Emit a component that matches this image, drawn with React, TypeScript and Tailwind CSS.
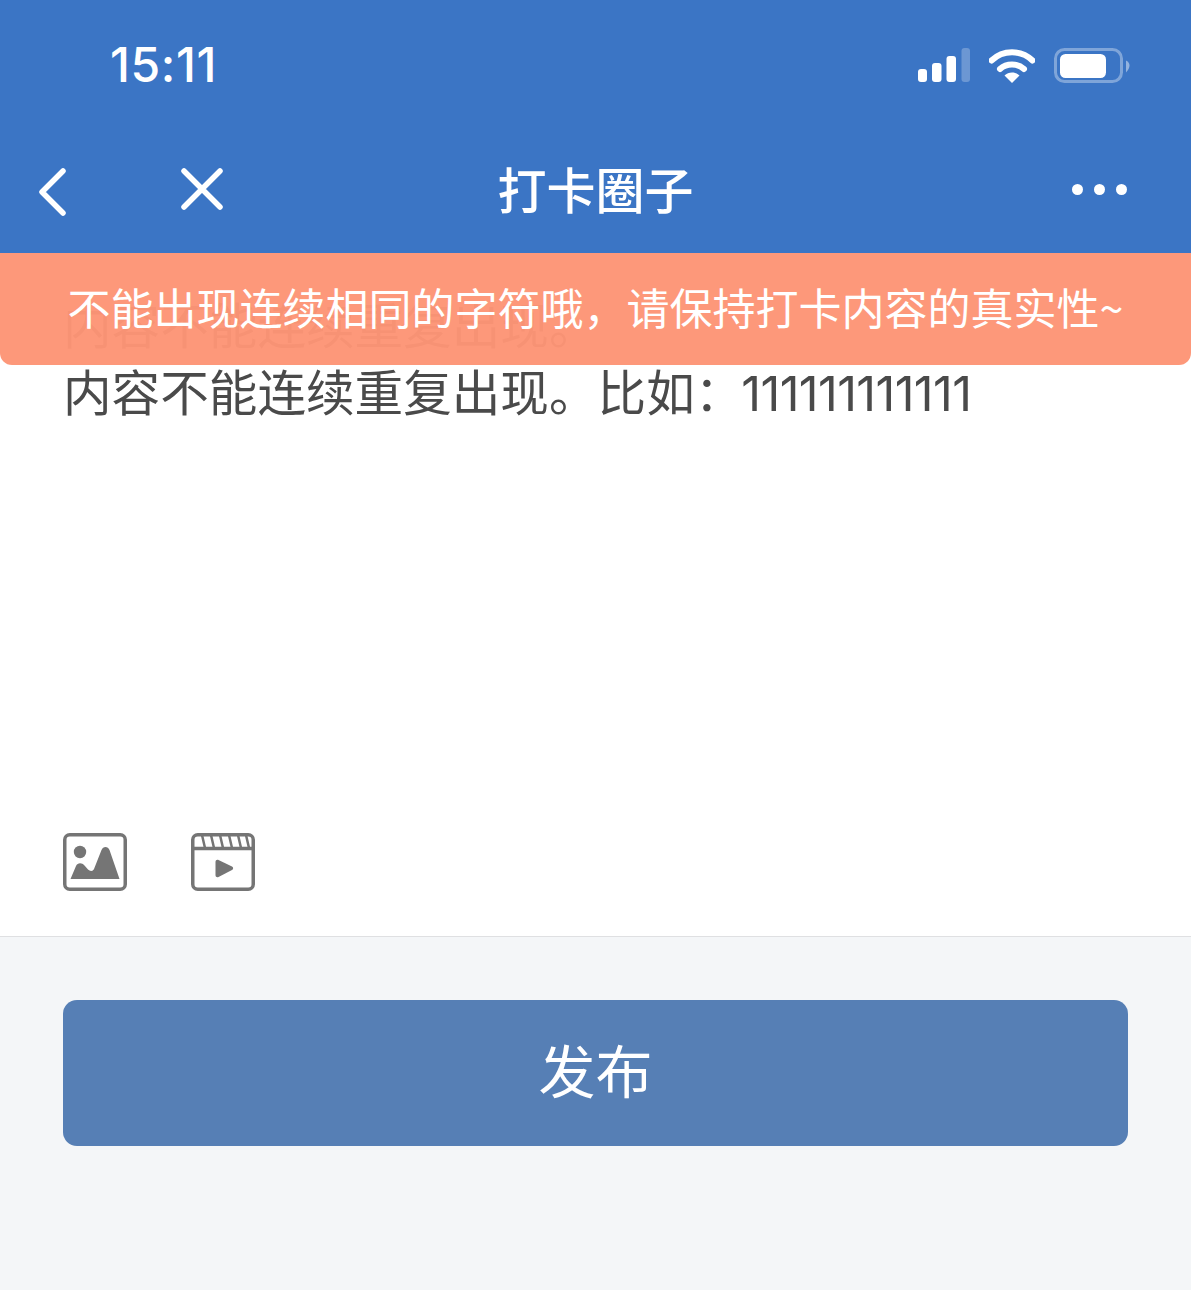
const CJK = '"Noto Sans CJK SC", "Liberation Sans", sans-serif';

function SignalIcon() {
  return (
    <svg width="53" height="34" viewBox="0 0 53 34" aria-hidden>
      <rect x="1" y="21" width="9" height="13" rx="3" fill="#fff" />
      <rect x="15" y="15" width="9.5" height="19" rx="3" fill="#fff" />
      <rect x="29.5" y="8" width="9.5" height="26" rx="3" fill="#fff" />
      <rect x="44.5" y="0" width="8.5" height="34" rx="3" fill="#fff" fillOpacity="0.25" />
    </svg>
  );
}

function WifiIcon() {
  return (
    <svg width="46" height="35" viewBox="0 0 46 35" fill="none" aria-hidden>
      <path d="M2.5 12.5C14 1.5 32 1.5 43.5 12.5" stroke="#fff" strokeWidth="6" strokeLinecap="round" />
      <path d="M11 21C17.5 15 28.5 15 35 21" stroke="#fff" strokeWidth="6" strokeLinecap="round" />
      <path d="M15.5 27.5C19.5 23.5 26.5 23.5 30.5 27.5L23 35Z" fill="#fff" />
    </svg>
  );
}

function BatteryIcon() {
  return (
    <svg width="76" height="35" viewBox="0 0 76 35" fill="none" aria-hidden>
      <rect x="1.5" y="1.5" width="66" height="32" rx="9" stroke="#fff" strokeOpacity="0.35" strokeWidth="3" />
      <rect x="6" y="6" width="46" height="24" rx="5.5" fill="#fff" />
      <path d="M72 12.5C74.5 13.5 75.5 15.5 75.5 17.5C75.5 19.5 74.5 21.5 72 24.5Z" fill="#fff" fillOpacity="0.45" />
    </svg>
  );
}

function ImageIcon() {
  return (
    <svg width="64" height="58" viewBox="0 0 64 58" fill="none" aria-hidden>
      <rect x="1.75" y="1.75" width="60.5" height="54.5" rx="5" stroke="#757575" strokeWidth="3.5" />
      <circle cx="17" cy="19" r="6.2" fill="#757575" />
      <path
        d="M7.5 46L13 33C14.5 29.5 19 29.5 21.5 32.5L25 36.5C27 38.5 30 38.5 31 36L38.5 17C40 13 45 13 46.5 17L56.5 46Z"
        fill="#757575"
      />
    </svg>
  );
}

function VideoIcon() {
  return (
    <svg width="64" height="58" viewBox="0 0 64 58" fill="none" aria-hidden>
      <rect x="1.75" y="1.75" width="60.5" height="54.5" rx="5" stroke="#757575" strokeWidth="3.5" />
      <path d="M2 15.5H62" stroke="#757575" strokeWidth="3.5" />
      <path
        d="M11 2L14 15M20 2L23 15M29 2L32 15M38 2L41 15M47 2L50 15M55 2L58 15"
        stroke="#757575"
        strokeWidth="2.5"
      />
      <path d="M24.5 29C24.5 27 26 26.5 27.5 27L41 33.5C42.5 34.5 42.5 36 41 37L27.5 44C26 44.5 24.5 44 24.5 42Z" fill="#757575" />
    </svg>
  );
}

export default function App() {
  return (
    <div
      className="relative flex h-[1290px] w-full flex-col overflow-hidden bg-[#f4f6f8]"
      style={{ fontFamily: CJK }}
    >
      <header className="h-[253px] shrink-0 bg-[#3b75c5] text-white">
        <div className="flex h-[130px] items-center justify-between pl-[110px] pr-[61px]">
          <span
            className="text-[48px] leading-none font-medium tracking-[0.6px]"
            style={{ fontFamily: 'Inter, sans-serif' }}
          >
            15:11
          </span>
          <div className="flex items-center gap-[19px]">
            <SignalIcon />
            <WifiIcon />
            <BatteryIcon />
          </div>
        </div>
        <div className="grid h-[118px] grid-cols-[1fr_auto_1fr] items-center px-[64px]">
          <div className="-ml-[26px] flex items-center gap-[114px]">
            <svg className="mt-[5px]" width="29" height="48" viewBox="0 0 29 48" fill="none" aria-hidden>
              <path d="M25 3L4 24L25 45" stroke="#fff" strokeWidth="5.5" strokeLinecap="round" strokeLinejoin="round" />
            </svg>
            <svg width="42" height="42" viewBox="0 0 42 42" fill="none" aria-hidden>
              <path d="M3 3L39 39M39 3L3 39" stroke="#fff" strokeWidth="5.5" strokeLinecap="round" />
            </svg>
          </div>
          <h1 className="mb-[4px] text-[49px] leading-none font-medium">打卡圈子</h1>
          <div className="flex items-center justify-end gap-[11px]">
            <span className="size-[11px] rounded-full bg-white" />
            <span className="size-[11px] rounded-full bg-white" />
            <span className="size-[11px] rounded-full bg-white" />
          </div>
        </div>
      </header>

      <div className="absolute top-[253px] left-0 flex h-[112px] w-full items-center justify-center rounded-b-[12px] bg-[#fd9576]/97 pb-[5px] text-[43px] leading-none whitespace-nowrap text-white">
        不能出现连续相同的字符哦，请保持打卡内容的真实性~
      </div>

      <main className="flex h-[684px] shrink-0 flex-col justify-between border-b border-[#dfe0e2] bg-white pt-[37px] pr-[64px] pb-[45px] pl-[63px]">
        <div className="text-[48.6px] leading-[67px] text-[#4a4a4a]">
          <p>内容不能连续重复出现。</p>
          <p>
            内容不能连续重复出现。比如：
            <span className="-ml-[2px] tracking-[-0.6px]" style={{ fontFamily: 'Inter, sans-serif' }}>
              111111111111
            </span>
          </p>
        </div>
        <div className="flex items-center gap-[64px]">
          <ImageIcon />
          <VideoIcon />
        </div>
      </main>

      <div className="px-[63px] pt-[63px]">
        <button
          type="button"
          className="flex h-[146px] w-full items-center justify-center rounded-[14px] bg-[#567fb5] pb-[8px] text-[57px] text-white"
        >
          发布
        </button>
      </div>
    </div>
  );
}
